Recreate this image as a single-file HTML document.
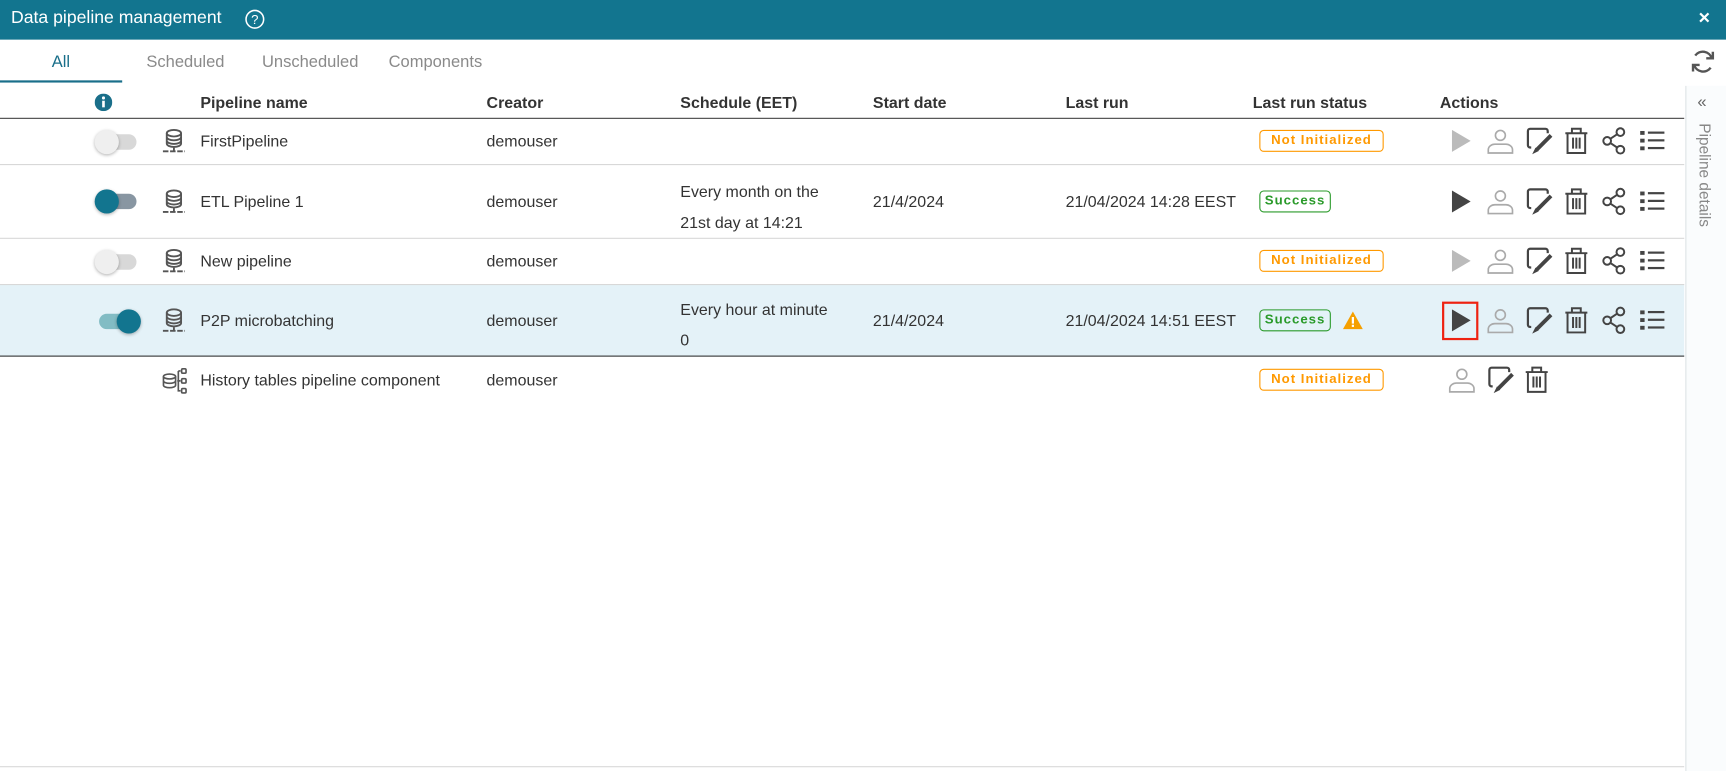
<!DOCTYPE html>
<html><head><meta charset="utf-8"><style>
*{margin:0;padding:0;box-sizing:border-box}
html,body{width:1726px;height:771px;overflow:hidden;background:#fff}
#w{width:1568px;height:701px;position:relative;transform:scale(1.1008);transform-origin:0 0;font-family:"Liberation Sans",sans-serif;color:#333;font-size:14.5px}
.a{position:absolute;white-space:nowrap}
.hdr{left:0;top:0;width:1568px;height:36px;background:#12758f}
.th{font-weight:bold;top:86px;font-size:14.5px}
.line{position:absolute;height:1px;background:#d8d8d8;left:0;width:1530px}
.badge{position:absolute;height:20px;border:1.5px solid;border-radius:4px;font-weight:bold;font-size:12px;letter-spacing:0.9px;line-height:17px;text-align:center}
.ni{color:#f90;border-color:#f90;width:113px}
.su{color:#2a9a2a;border-color:#2a9a2a;width:65px}
.tg{position:absolute;width:36px;height:14px;border-radius:7px}
.kn{position:absolute;width:22px;height:22px;border-radius:50%;top:-4px;box-shadow:0 1px 3px rgba(0,0,0,.3)}
svg{position:absolute}
</style></head><body><div id="w">
<div class="a hdr"></div>
<div class="a" style="left:10px;top:8px;color:#fff;font-size:16px">Data pipeline management</div>
<svg style="left:222px;top:8px" width="19" height="19" viewBox="0 0 19 19"><circle cx="9.5" cy="9.5" r="8" fill="none" stroke="#fff" stroke-width="1.4"/><text x="9.5" y="14" text-anchor="middle" fill="#fff" font-size="12" font-family="Liberation Sans">?</text></svg>
<div class="a" style="left:1543px;top:6px;color:#fff;font-size:18px;font-weight:bold">×</div>

<div class="a" style="left:47px;top:48px;color:#1a6f8a;font-size:15px">All</div>
<div class="a" style="left:0;top:73px;width:111px;height:2px;background:#1a6f8a"></div>
<div class="a" style="left:133px;top:48px;color:#8a8a8a;font-size:15px">Scheduled</div>
<div class="a" style="left:238px;top:48px;color:#8a8a8a;font-size:15px">Unscheduled</div>
<div class="a" style="left:353px;top:48px;color:#8a8a8a;font-size:15px">Components</div>
<svg style="left:1535px;top:44px" width="24" height="24" viewBox="0 0 24 24" fill="none" stroke="#555" stroke-width="2.2"><path d="M20 9A8.5 8.5 0 0 0 5 6.5"/><path d="M4 15a8.5 8.5 0 0 0 15 2.5"/><path d="M21 3v6h-6" /><path d="M3 21v-6h6"/></svg>

<div class="a" style="left:1531px;top:78px;width:37px;height:623px;border-left:1px solid #dde3e6;background:#fafcfd"></div>
<div class="a" style="left:1542px;top:84px;color:#666;font-size:15px">«</div>
<div class="a" style="left:1540px;top:112px;color:#888;font-size:14px;transform-origin:0 0;transform:translate(17px,0) rotate(90deg)">Pipeline details</div>

<svg style="left:86px;top:85px" width="16" height="16" viewBox="0 0 16 16"><circle cx="8" cy="8" r="8" fill="#1a6f8a"/><rect x="6.8" y="6.5" width="2.4" height="6" fill="#fff"/><circle cx="8" cy="4" r="1.4" fill="#fff"/></svg>
<div class="a th" style="left:182px">Pipeline name</div>
<div class="a th" style="left:442px">Creator</div>
<div class="a th" style="left:618px">Schedule (EET)</div>
<div class="a th" style="left:793px">Start date</div>
<div class="a th" style="left:968px">Last run</div>
<div class="a th" style="left:1138px">Last run status</div>
<div class="a th" style="left:1308px">Actions</div>
<div class="line" style="top:107px;background:#444"></div>

<div class="line" style="top:149px"></div>
<div class="line" style="top:216px"></div>
<div class="a" style="left:0;top:258px;width:1530px;height:66px;background:#e4f2f8;border-top:1px solid #d8d8d8;border-bottom:1px solid #333"></div>
<div class="line" style="top:696px"></div>

<div class="tg" style="left:88px;top:122px;background:#d8d8d8"><div class="kn" style="left:-2px;background:#efefef"></div></div>
<div class="tg" style="left:88px;top:176px;background:#8896a2"><div class="kn" style="left:-2px;background:#12758f"></div></div>
<div class="tg" style="left:88px;top:231px;background:#d8d8d8"><div class="kn" style="left:-2px;background:#efefef"></div></div>
<div class="tg" style="left:90px;top:285px;background:#82bcc4"><div class="kn" style="left:16px;background:#12758f"></div></div>

<svg width="0" height="0"><defs><g id="db" fill="none" stroke="#555" stroke-width="1.7"><ellipse cx="11" cy="4" rx="6.5" ry="3"/><path d="M4.5 4v9.5c0 1.6 2.9 3 6.5 3s6.5-1.4 6.5-3V4M4.5 7.5c0 1.6 2.9 3 6.5 3s6.5-1.4 6.5-3M4.5 10.8c0 1.6 2.9 3 6.5 3s6.5-1.4 6.5-3M11 16.5v3.5"/><path d="M1 20.5h20" stroke-dasharray="5 1.5"/></g></defs></svg>
<svg style="left:147px;top:117px" width="22" height="22" viewBox="0 0 22 22"><use href="#db"/></svg>
<svg style="left:147px;top:172px" width="22" height="22" viewBox="0 0 22 22"><use href="#db"/></svg>
<svg style="left:147px;top:226px" width="22" height="22" viewBox="0 0 22 22"><use href="#db"/></svg>
<svg style="left:147px;top:280px" width="22" height="22" viewBox="0 0 22 22"><use href="#db"/></svg>
<svg style="left:146px;top:334px" width="26" height="24" viewBox="0 0 26 24" fill="none" stroke="#555" stroke-width="1.5"><ellipse cx="8" cy="8" rx="5.5" ry="2.2"/><path d="M2.5 8v8c0 1.2 2.5 2.2 5.5 2.2s5.5-1 5.5-2.2V8M2.5 12c0 1.2 2.5 2.2 5.5 2.2s5.5-1 5.5-2.2M15 12h3M16 3v18h2M16 3h2"/><rect x="19" y="1" width="4" height="4" rx="1"/><rect x="19" y="10" width="4" height="4" rx="1"/><rect x="19" y="19" width="4" height="4" rx="1"/></svg>

<div class="a" style="left:182px;top:121px">FirstPipeline</div>
<div class="a" style="left:442px;top:121px">demouser</div>
<div class="a" style="left:182px;top:176px">ETL Pipeline 1</div>
<div class="a" style="left:442px;top:176px">demouser</div>
<div class="a" style="left:618px;top:161px;line-height:28px">Every month on the<br>21st day at 14:21</div>
<div class="a" style="left:793px;top:176px">21/4/2024</div>
<div class="a" style="left:968px;top:176px">21/04/2024 14:28 EEST</div>
<div class="a" style="left:182px;top:230px">New pipeline</div>
<div class="a" style="left:442px;top:230px">demouser</div>
<div class="a" style="left:182px;top:284px">P2P microbatching</div>
<div class="a" style="left:442px;top:284px">demouser</div>
<div class="a" style="left:618px;top:268px;line-height:28px">Every hour at minute<br>0</div>
<div class="a" style="left:793px;top:284px">21/4/2024</div>
<div class="a" style="left:968px;top:284px">21/04/2024 14:51 EEST</div>
<div class="a" style="left:182px;top:338px">History tables pipeline component</div>
<div class="a" style="left:442px;top:338px">demouser</div>

<div class="badge ni" style="left:1144px;top:118px">Not Initialized</div>
<div class="badge su" style="left:1144px;top:173px">Success</div>
<div class="badge ni" style="left:1144px;top:227px">Not Initialized</div>
<div class="badge su" style="left:1144px;top:281px">Success</div>
<svg style="left:1219px;top:282px" width="20" height="18" viewBox="0 0 20 18"><path d="M10 1L19 17H1z" fill="#f5a000"/><rect x="9" y="6" width="2" height="6" fill="#fff"/><rect x="9" y="13" width="2" height="2" fill="#fff"/></svg>
<div class="badge ni" style="left:1144px;top:335px">Not Initialized</div>

<svg style="left:0;top:0" width="1568" height="701">
<defs>
<g id="play"><path d="M-8-10L9 0-8 10z"/></g>
<g id="user" fill="none" stroke="#aaa" stroke-width="1.5"><circle cx="0" cy="-5" r="4.5"/><path d="M-11 11v-3c0-3 3-5 6-5h10c3 0 6 2 6 5v3z"/></g>
<g id="edit" fill="none" stroke="#444"><path d="M7-7v-2a2 2 0 0 0-2-2H-9a2 2 0 0 0-2 2V4a2 2 0 0 0 2 2h1" stroke-width="2"/><path d="M10-5L-3 8" stroke-width="3.5"/><path d="M-4 7l-2 4 4-2z" fill="#444" stroke-width="1"/></g>
<g id="trash" fill="none" stroke="#444" stroke-width="1.8"><path d="M-10-7h20M-4-7v-4h8v4M-8-7v18h16V-7M-3-3v10M0-3v10M3-3v10"/></g>
<g id="share" fill="none" stroke="#444" stroke-width="1.8"><circle cx="-6" cy="0" r="3.5"/><circle cx="6" cy="-8" r="3.5"/><circle cx="6" cy="8" r="3.5"/><path d="M-3-2l6-4M-3 2l6 4"/></g>
<g id="list" fill="#444"><rect x="-11" y="-9" width="4" height="3.5"/><rect x="-11" y="-2" width="4" height="3.5"/><rect x="-11" y="5" width="4" height="3.5"/><rect x="-4" y="-8.5" width="15" height="2"/><rect x="-4" y="-1.5" width="15" height="2"/><rect x="-4" y="5.5" width="15" height="2"/></g>
</defs>
<use href="#play" x="1327" y="128" fill="#bbb"/><use href="#user" x="1363" y="128"/><use href="#edit" x="1399" y="128"/><use href="#trash" x="1432" y="128"/><use href="#share" x="1466" y="128"/><use href="#list" x="1501" y="128"/>
<use href="#play" x="1327" y="183" fill="#444"/><use href="#user" x="1363" y="183"/><use href="#edit" x="1399" y="183"/><use href="#trash" x="1432" y="183"/><use href="#share" x="1466" y="183"/><use href="#list" x="1501" y="183"/>
<use href="#play" x="1327" y="237" fill="#bbb"/><use href="#user" x="1363" y="237"/><use href="#edit" x="1399" y="237"/><use href="#trash" x="1432" y="237"/><use href="#share" x="1466" y="237"/><use href="#list" x="1501" y="237"/>
<rect x="1311" y="275" width="31" height="33" fill="none" stroke="#e21" stroke-width="2"/>
<use href="#play" x="1327" y="291" fill="#444"/><use href="#user" x="1363" y="291"/><use href="#edit" x="1399" y="291"/><use href="#trash" x="1432" y="291"/><use href="#share" x="1466" y="291"/><use href="#list" x="1501" y="291"/>
<use href="#user" x="1328" y="345"/><use href="#edit" x="1364" y="345"/><use href="#trash" x="1396" y="345"/>
</svg>
</div></body></html>
